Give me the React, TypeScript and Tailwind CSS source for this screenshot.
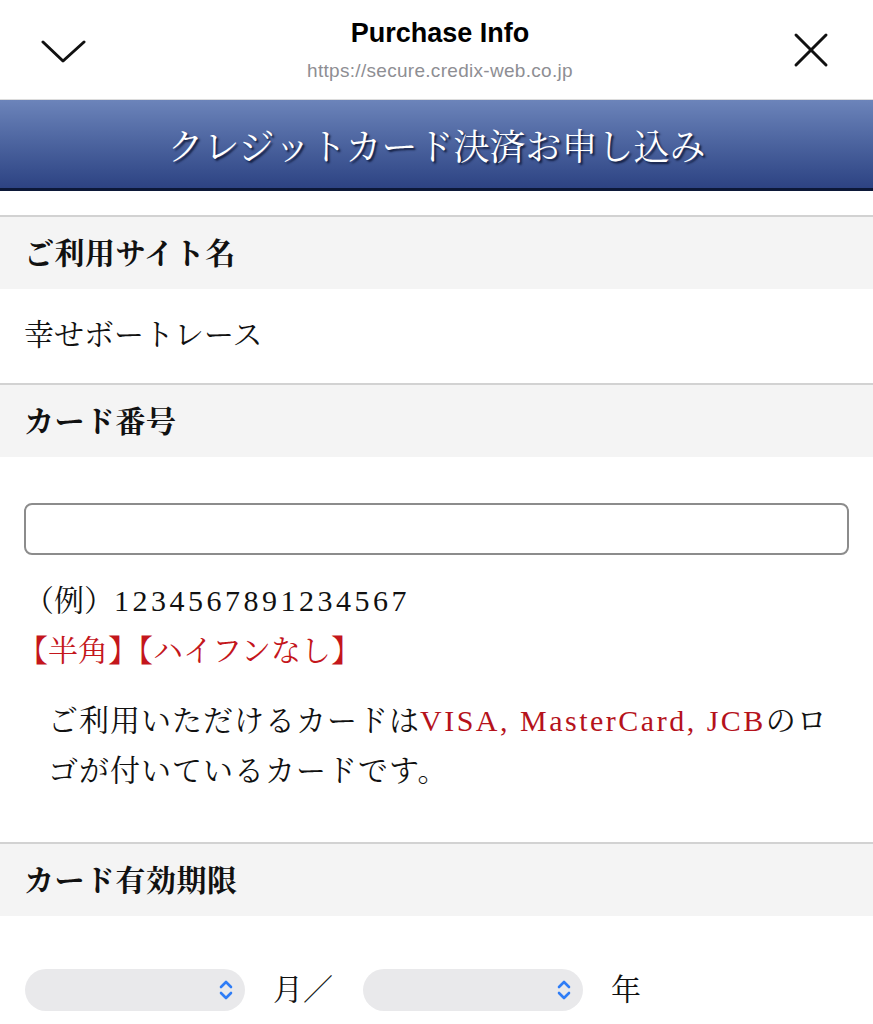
import React from 'react';

const serif = "font-['Liberation_Serif','Noto_Serif_CJK_JP','Noto_Sans_CJK_JP',serif]";

const SectionHeader: React.FC<{ title: string }> = ({ title }) => (
  <div className="border-t-2 border-[#d2d2d2] bg-[#f4f4f4] h-[74px] flex items-center px-6">
    <h2 className="text-[30px] font-bold text-[#111] tracking-[0.5px]">{title}</h2>
  </div>
);

const SelectBox: React.FC = () => (
  <div className="w-[220px] h-[42px] rounded-full bg-[#e9e9eb] flex items-center justify-end pr-[12px]">
    <svg width="14" height="22" viewBox="0 0 14 22" fill="none" stroke="#2f7df6" strokeWidth="2.6" strokeLinecap="round" strokeLinejoin="round">
      <polyline points="2,8 7,3 12,8" />
      <polyline points="2,14 7,19 12,14" />
    </svg>
  </div>
);

const App: React.FC = () => {
  return (
    <div className="w-[873px] min-h-[1024px] bg-white overflow-hidden">
      {/* top sheet bar */}
      <div className="h-[100px] flex items-center justify-between pl-[41px] pr-[44px] border-b border-[#dcdcdc]">
        <svg width="46" height="26" viewBox="0 0 46 26" fill="none" stroke="#111" strokeWidth="3" strokeLinecap="round" strokeLinejoin="round" className="mt-[4px]">
          <polyline points="2,3 22,22 43,3" />
        </svg>
        <div className="flex flex-col items-center font-['Liberation_Sans',Arial,sans-serif] mt-[1px]">
          <div className="text-[27px] font-bold text-black leading-[32px]">Purchase Info</div>
          <div className="text-[19px] text-[#8e8e93] leading-[24px] mt-[10px] tracking-[0.3px]">https://secure.credix-web.co.jp</div>
        </div>
        <svg width="36" height="36" viewBox="0 0 36 36" fill="none" stroke="#111" strokeWidth="3" strokeLinecap="round">
          <line x1="3" y1="3" x2="33" y2="33" />
          <line x1="33" y1="3" x2="3" y2="33" />
        </svg>
      </div>

      <div className={serif}>
        {/* title banner */}
        <div className="h-[91px] bg-gradient-to-b from-[#6c84ba] to-[#2d4383] border-b-[3px] border-[#0c1838] flex items-center justify-center">
          <h1 className="mt-[8px] text-[36px] text-white [text-shadow:2px_2px_2px_rgba(10,20,50,0.85)]">
            クレジットカード決済お申し込み
          </h1>
        </div>

        <div className="h-[24px]" />

        <SectionHeader title="ご利用サイト名" />
        <div className="px-6 pt-[21px] pb-[23px]">
          <p className="text-[30px] leading-[50px] text-[#111]">幸せボートレース</p>
        </div>

        <SectionHeader title="カード番号" />
        <div className="px-6 pt-[46px] pb-[46px]">
          <input
            type="text"
            className="block w-full h-[52px] rounded-[8px] border-2 border-[#8c8c8c] bg-white outline-none"
          />
          <p className="mt-[21px] text-[30px] leading-[50px] text-[#111]">
            <span>（例）</span>
            <span className="tracking-[3.5px]">1234567891234567</span>
          </p>
          <p className="text-[30px] leading-[50px] text-[#c4161c] -ml-[6px]">【半角】【ハイフンなし】</p>
          <p className="mt-[20px] ml-6 text-[30px] leading-[50px] text-[#111] tracking-[1px]">
            ご利用いただけるカードは
            <span className="text-[#b5121b] tracking-[2.5px]">VISA, MasterCard, JCB</span>
            のロ
            <br />
            ゴが付いているカードです。
          </p>
        </div>

        <SectionHeader title="カード有効期限" />
        <div className="pl-[25px] pt-[51px] pb-[30px] flex items-center">
          <SelectBox />
          <span className="ml-[28px] text-[30px] text-[#111]">月／</span>
          <span className="ml-[30px]">
            <SelectBox />
          </span>
          <span className="ml-[28px] text-[30px] text-[#111]">年</span>
        </div>
      </div>
    </div>
  );
};

export default App;
